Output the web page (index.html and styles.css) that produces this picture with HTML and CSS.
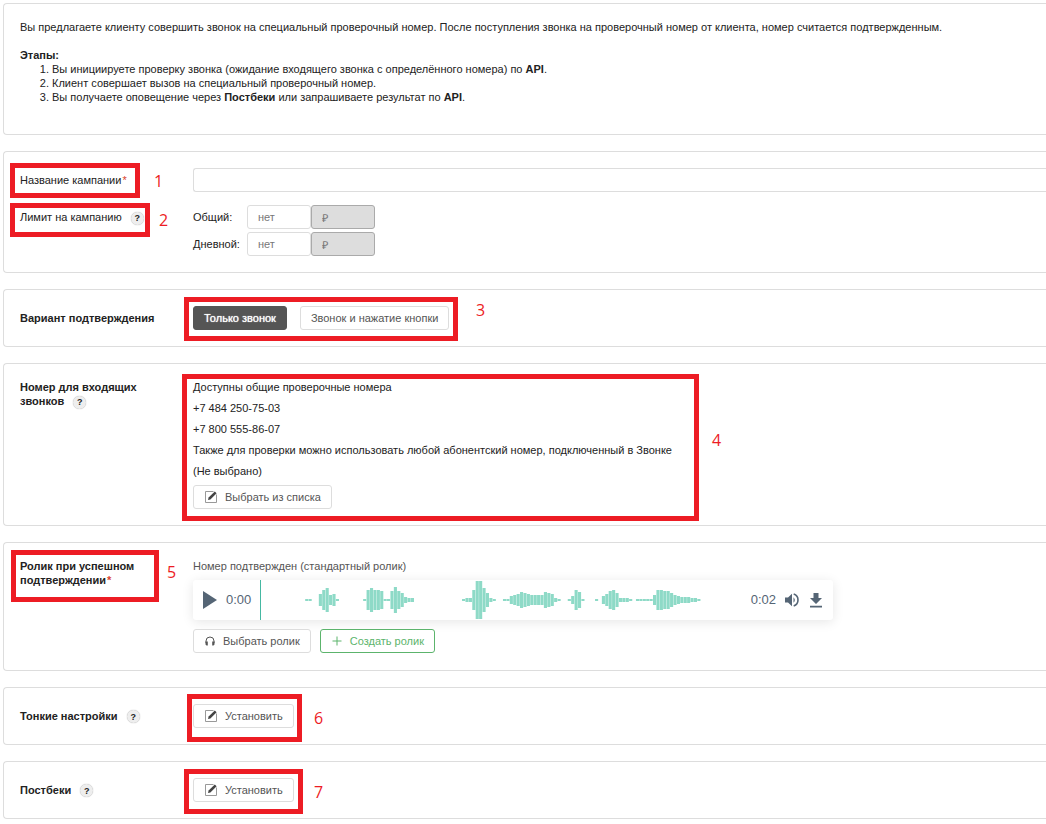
FILE: index.html
```html
<!DOCTYPE html>
<html lang="ru">
<head>
<meta charset="utf-8">
<title>Настройки кампании</title>
<link rel="stylesheet" href="styles.css">
</head>
<body>
<svg class="sprite" aria-hidden="true">
  <symbol id="edit" viewBox="0 0 12 12">
    <path d="M8.500.5h-8v11h11V3.500" fill="none" stroke="#999"/>
    <path d="M3 9l.6-2.400L9.800.4l1.800 1.800-6.200 6.200z" fill="#444"/>
  </symbol>
</svg>
<main class="page">
  <section class="panel intro">
    <p>Вы предлагаете клиенту совершить звонок на специальный проверочный номер. После поступления звонка на проверочный номер от клиента, номер считается подтвержденным.</p>
    <h2>Этапы:</h2>
    <ol>
      <li>Вы инициируете проверку звонка (ожидание входящего звонка с определённого номера) по <b>API</b>.</li>
      <li>Клиент совершает вызов на специальный проверочный номер.</li>
      <li>Вы получаете оповещение через <b>Постбеки</b> или запрашиваете результат по <b>API</b>.</li>
    </ol>
  </section>

  <section class="panel">
    <div class="row">
      <label class="name" for="title">Название кампании<span class="req">*</span></label>
      <input class="field open" id="title" type="text">
    </div>
    <div class="row">
      <div class="name">Лимит на кампанию <button class="help" type="button">?</button></div>
      <div class="limits">
        <label for="total">Общий:</label>
        <input class="field" id="total" type="text" placeholder="нет">
        <input class="field" type="text" value="₽" aria-label="Валюта общего лимита" disabled>
        <label for="daily">Дневной:</label>
        <input class="field" id="daily" type="text" placeholder="нет">
        <input class="field" type="text" value="₽" aria-label="Валюта дневного лимита" disabled>
      </div>
    </div>
    <div class="mark m1"><span>1</span></div>
    <div class="mark m2"><span>2</span></div>
  </section>

  <section class="panel">
    <div class="row">
      <div class="name strong">Вариант подтверждения</div>
      <div class="choices">
        <button class="btn active" type="button">Только звонок</button>
        <button class="btn" type="button">Звонок и нажатие кнопки</button>
      </div>
    </div>
    <div class="mark m3"><span>3</span></div>
  </section>

  <section class="panel">
    <div class="row">
      <div class="name strong top">Номер для входящих звонков <button class="help" type="button">?</button></div>
      <div class="stack">
        <p>Доступны общие проверочные номера</p>
        <p>+7 484 250-75-03</p>
        <p>+7 800 555-86-07</p>
        <p>Также для проверки можно использовать любой абонентский номер, подключенный в Звонке</p>
        <p>(Не выбрано)</p>
        <button class="btn" type="button"><svg class="icon"><use href="#edit"/></svg>Выбрать из списка</button>
      </div>
    </div>
    <div class="mark m4"><span>4</span></div>
  </section>

  <section class="panel">
    <div class="row">
      <div class="name strong top">Ролик при успешном подтверждении<span class="req">*</span></div>
      <div class="stack">
        <p class="soft">Номер подтвержден (стандартный ролик)</p>
        <div class="player">
          <button class="ctl" type="button" aria-label="Воспроизвести"><svg width="14" height="18" viewBox="0 0 14 18"><path d="M0 0l14 9-14 9z" fill="#556575"/></svg></button>
          <span class="time">0:00</span>
          <svg class="wave" id="wave" viewBox="0 0 480 40"></svg>
          <span class="time">0:02</span>
          <button class="ctl volume" type="button" aria-label="Громкость"><svg width="14" height="14" viewBox="0 0 14 14"><path d="M0 4.500h3L7 .8v12.400L3 9.500H0z" fill="#556575"/><path d="M8.500 4.200q2.600 2.800 0 5.600z" fill="#556575"/><path d="M8.700 1.100a6.200 6.200 0 0 1 0 11.800" fill="none" stroke="#556575" stroke-width="1.600"/></svg></button>
          <button class="ctl" type="button" aria-label="Скачать"><svg width="12" height="15" viewBox="0 0 12 15"><path d="M3.500 0h5v5H12l-6 6-6-6h3.500zM0 12.800h12v1.700H0z" fill="#556575"/></svg></button>
        </div>
        <div class="actions">
          <button class="btn" type="button"><svg class="icon small" viewBox="0 0 10 10"><path d="M1 7V5a4 4 0 0 1 8 0v2" fill="none" stroke="#555"/><path d="M.5 5.500h2.300V9.500H1.500L.5 8.500zM9.500 5.500H7.200V9.500h1.300l1-1z" fill="#555"/></svg>Выбрать ролик</button>
          <button class="btn green" type="button"><svg class="icon small" viewBox="0 0 10 10"><path d="M5 .5v9M.5 5h9" fill="none" stroke="#5cb46c"/></svg>Создать ролик</button>
        </div>
      </div>
    </div>
    <div class="mark m5"><span>5</span></div>
  </section>

  <section class="panel">
    <div class="row">
      <div class="name strong">Тонкие настройки <button class="help" type="button">?</button></div>
      <div><button class="btn" type="button"><svg class="icon"><use href="#edit"/></svg>Установить</button></div>
    </div>
    <div class="mark m6"><span>6</span></div>
  </section>

  <section class="panel">
    <div class="row">
      <div class="name strong">Постбеки <button class="help" type="button">?</button></div>
      <div><button class="btn" type="button"><svg class="icon"><use href="#edit"/></svg>Установить</button></div>
    </div>
    <div class="mark m7"><span>7</span></div>
  </section>
</main>
<script src="wave.js"></script>
</body>
</html>
```
FILE: styles.css
```css
* { box-sizing: border-box; }
body { margin: 0; background: #fff; color: #222; font: 11px/14px "Liberation Sans", Arial, sans-serif; }
p, h2, ol { margin: 0; font-size: inherit; }
button, input { font: inherit; margin: 0; }
.sprite { position: absolute; width: 0; height: 0; }

.page { display: flex; flex-direction: column; gap: 16px; padding: 3px 0 3px 3px; }
.panel { position: relative; display: flex; flex-direction: column; gap: 13px; padding: 16px 0 16px 16px; border: 1px solid #ddd; border-right: 0; border-radius: 4px 0 0 4px; }
.intro { display: block; padding-bottom: 30px; }
.intro p { margin-bottom: 14px; }
.intro ol { padding-left: 32px; }

.row { display: grid; grid-template-columns: 173px 1fr; align-items: center; }
.name { padding-right: 36px; }
.row:has(.limits) { align-items: start; }
.row:has(.limits) .name { line-height: 24px; padding-right: 0; }
.strong { font-weight: bold; }
.top { align-self: start; }
.req { margin-left: 1px; color: #d9432f; }
.help { width: 13px; height: 13px; margin-left: 6px; padding: 0; border: 0; border-radius: 50%; background: #eee; box-shadow: 0 0 1px #999; color: #222; font-size: 9px; line-height: 12px; font-weight: bold; vertical-align: middle; }

.field { width: 100%; height: 24px; padding: 0 10px; border: 1px solid #ddd; border-radius: 3px; background: #fff; color: #777; outline: 0; }
.field::placeholder { color: #777; opacity: 1; }
.field:disabled { border-color: #aaa; background: #ddd; }
.open { border-right: 0; border-radius: 3px 0 0 3px; }
.limits { display: grid; grid-template-columns: 54px 64px 64px; row-gap: 3px; align-items: center; }

.choices { display: flex; gap: 13px; }
.actions { display: flex; gap: 9px; margin-top: 2px; padding-bottom: 1px; }
.stack { display: flex; flex-direction: column; align-items: flex-start; gap: 7px; }
.soft { color: #555; }
.btn { display: inline-flex; align-items: center; height: 24px; padding: 0 10px; border: 1px solid #ddd; border-radius: 3px; background: #fff; color: #555; white-space: nowrap; }
.active { border-color: #555; background: #555; color: #fff; text-shadow: 0 0 1px #fff; }
.green { border-color: #5cb46c; color: #5cb46c; }
.icon { width: 12px; height: 12px; margin: 0 8px 0 1px; }
.small { width: 10px; height: 10px; }

.player { display: flex; align-items: center; gap: 9px; width: 100%; max-width: 640px; height: 40px; padding: 0 11px 0 10px; border-radius: 3px; background: #fff; box-shadow: 0 2px 12px rgba(0, 0, 0, .1); }
.ctl { display: flex; padding: 0; border: 0; background: none; }
.volume { margin: 0 2px 0 0; }
.time { color: #556575; font: 13px/20px "Liberation Sans", Arial, sans-serif; }
.wave { flex: 1; min-width: 0; height: 40px; border-left: 1px solid #45b8a2; }

.mark { position: absolute; border: 5px solid #ed1c24; pointer-events: none; }
.mark span { position: absolute; left: 100%; top: 50%; margin: -10px 0 0 18px; color: #ed1c24; font: 16px/20px "Open Sans", sans-serif; }
.m1 { left: 6px; top: 11px; width: 130px; height: 35px; }
.m2 { left: 6px; top: 51px; width: 140px; height: 34px; }
.m1 span { margin-left: 19px; }
.m2 span, .m5 span { margin-left: 14px; }
.m3 { left: 180px; top: 7px; width: 274px; height: 44px; }
.m3 span { margin-top: -19px; margin-left: 23px; }
.m4 { left: 178px; top: 10px; width: 517px; height: 147px; }
.m4 span { margin-top: -18px; }
.m5 { left: 7px; top: 7px; width: 148px; height: 52px; }
.m5 span { margin-top: -14px; margin-left: 13px; }
.m6 { left: 183px; top: 6px; width: 115px; height: 48px; }
.m7 { left: 180px; top: 7px; width: 119px; height: 45px; }
.m6 span { margin-left: 17px; }
.m7 span { margin-left: 16px; }
```
FILE: wave.js
```js
// Runs of bar heights, keyed by the index of the first bar in the run.
const runs = {
  0: [2, 2],
  4: [12, 20, 24, 10, 12, 2],
  17: [2, 20, 24, 20, 20, 18, 2, 2, 18, 26, 18, 14, 6, 4, 4],
  46: [2, 4, 4, 20, 38, 38, 24, 14, 4, 2],
  58: [2, 2, 8, 10, 12, 16, 14, 12, 10, 10, 10, 10, 16, 14, 12, 4, 2],
  77: [2, 8, 20, 16, 2],
  85: [2],
  87: [8, 12, 18, 20, 14, 4, 4, 4, 2],
  97: [2, 2, 2, 2, 2, 10, 20, 20, 18, 18, 14, 10, 8, 6, 6, 6, 4, 4, 2]
};
const pitch = 3.41;
const wave = document.getElementById("wave");
for (const [start, heights] of Object.entries(runs)) {
  heights.forEach((h, i) => {
    const bar = document.createElementNS("http://www.w3.org/2000/svg", "rect");
    bar.setAttribute("x", 44 + (Number(start) + i) * pitch);
    bar.setAttribute("y", 20 - h / 2);
    bar.setAttribute("width", 3.1);
    bar.setAttribute("height", h);
    bar.setAttribute("fill", "#8edac7");
    wave.append(bar);
  });
}
```
